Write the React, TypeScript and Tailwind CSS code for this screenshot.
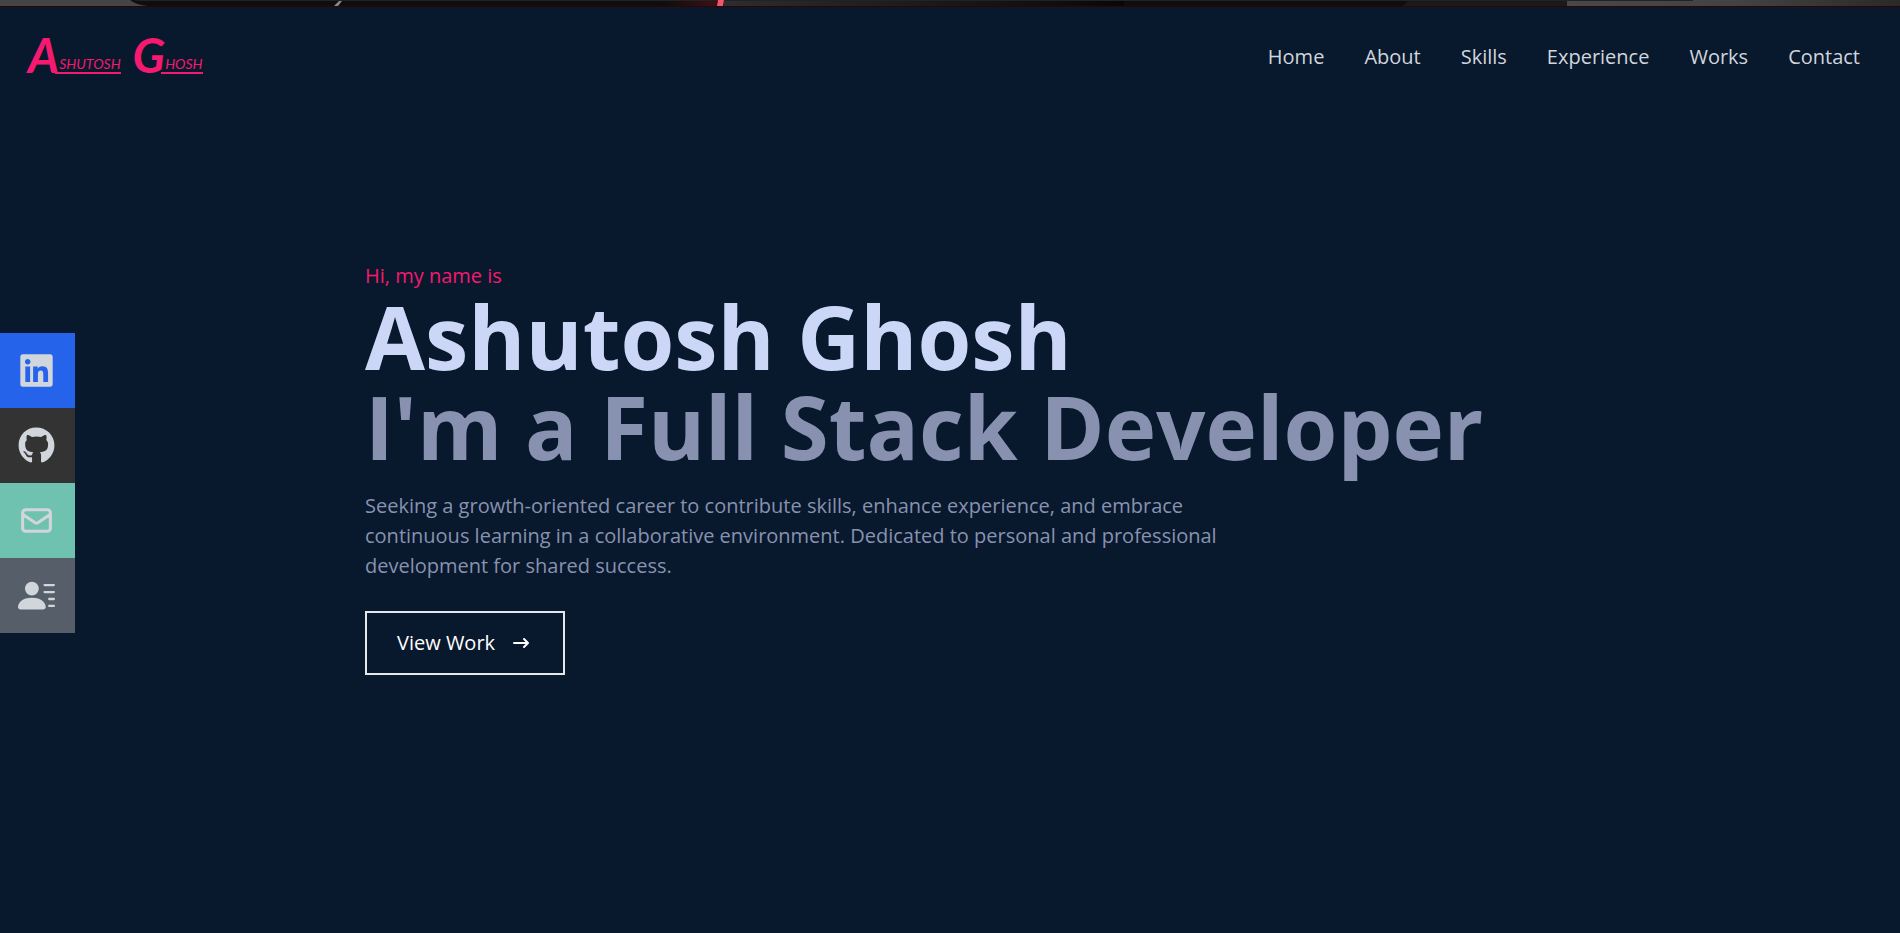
import { FaGithub, FaLinkedin } from "react-icons/fa";
import { HiArrowNarrowRight, HiOutlineMail } from "react-icons/hi";
import { BsFillPersonLinesFill } from "react-icons/bs";

const links = ["Home", "About", "Skills", "Experience", "Works", "Contact"];

const socials = [
  { label: "LinkedIn", tile: "bg-[#2563eb]", Icon: FaLinkedin },
  { label: "GitHub", tile: "bg-[#333333]", Icon: FaGithub },
  { label: "Email", tile: "bg-[#6fc2b0]", Icon: HiOutlineMail },
  { label: "Resume", tile: "bg-[#565f69]", Icon: BsFillPersonLinesFill },
];

function PhotoStrip() {
  return (
    <svg viewBox="0 0 1900 6" preserveAspectRatio="none" className="block h-1.5 w-full" aria-hidden="true">
      <defs>
        <linearGradient id="glow">
          <stop offset="0" stopColor="#0c0d0b" />
          <stop offset="1" stopColor="#3d1013" />
        </linearGradient>
        <linearGradient id="desk">
          <stop offset="0" stopColor="#2d2d2e" />
          <stop offset="1" stopColor="#080808" />
        </linearGradient>
        <linearGradient id="wall">
          <stop offset="0" stopColor="#484848" />
          <stop offset="0.5" stopColor="#434343" />
          <stop offset="1" stopColor="#2c2a28" />
        </linearGradient>
      </defs>
      <rect width="1900" height="6" fill="#0e0f0d" />
      <path d="M0 0h130q6 5 18 6H0z" fill="#454545" />
      <path d="M334 6l5-5h3l-4 5z" fill="#8a8a8a" />
      <rect x="660" width="57" height="6" fill="url(#glow)" />
      <rect x="724" width="400" height="6" fill="url(#desk)" />
      <path d="M1403 6l6-6h158v6z" fill="#191a19" />
      <rect x="1567" width="333" height="6" fill="url(#wall)" />
      <path d="M132 0h1561v1H140z" fill="#222226" />
      <path d="M718 0h6l-1 6h-6z" fill="#f0566e" />
    </svg>
  );
}

function LogoWord({ initial, rest }: { initial: string; rest: string }) {
  return (
    <span className="flex items-end">
      <span className="text-5xl leading-[38px] font-bold">{initial}</span>
      <span className="-ml-1 border-b-2 border-[#f5196f] pl-1 text-sm leading-[17px]">{rest}</span>
    </span>
  );
}

export default function App() {
  return (
    <div className="flex min-h-screen flex-col bg-[#08182d] font-['Open_Sans',sans-serif] text-gray-300">
      <div className="border-b border-[#300404]">
        <PhotoStrip />
      </div>

      <header className="flex h-[100px] items-center justify-between pr-10 pl-7">
        <a href="#home" aria-label="Ashutosh Ghosh" className="flex gap-3 pb-1 font-[Lato,sans-serif] text-[#f5196f] italic">
          <LogoWord initial="A" rest="SHUTOSH" />
          <LogoWord initial="G" rest="HOSH" />
        </a>
        <nav>
          <ul className="flex gap-10 text-xl leading-[30px]">
            {links.map((name) => (
              <li key={name}>
                <a href={`#${name.toLowerCase()}`}>{name}</a>
              </li>
            ))}
          </ul>
        </nav>
      </header>

      <aside className="fixed top-[333px] left-0">
        <ul>
          {socials.map(({ label, tile, Icon }) => (
            <li key={label}>
              <a href={`#${label.toLowerCase()}`} aria-label={label} className={`flex size-[75px] items-center justify-center pr-0.5 ${tile}`}>
                <Icon size={37} />
              </a>
            </li>
          ))}
        </ul>
      </aside>

      <main className="mx-auto flex w-full max-w-[1250px] flex-1 flex-col items-start px-10 pt-[154px]">
        <p className="text-xl leading-[30px] text-[#f5196f]">Hi, my name is</p>
        <h1 className="text-[87px] leading-[90px] font-bold whitespace-nowrap text-[#ccd6f6]">Ashutosh Ghosh</h1>
        <h2 className="text-[87px] leading-[90px] font-bold whitespace-nowrap text-[#8892b0]">I'm a Full Stack Developer</h2>
        <p className="max-w-[875px] py-5 text-xl leading-[30px] text-[#8892b0]">
          Seeking a growth-oriented career to contribute skills, enhance experience, and embrace continuous learning in a collaborative environment. Dedicated to personal and professional development for shared success.
        </p>
        <button className="mt-2.5 flex h-16 items-center border-2 border-gray-200 px-[30px] text-xl text-white">
          View Work
          <HiArrowNarrowRight size={20} className="mr-0.5 ml-4" />
        </button>
      </main>
    </div>
  );
}
